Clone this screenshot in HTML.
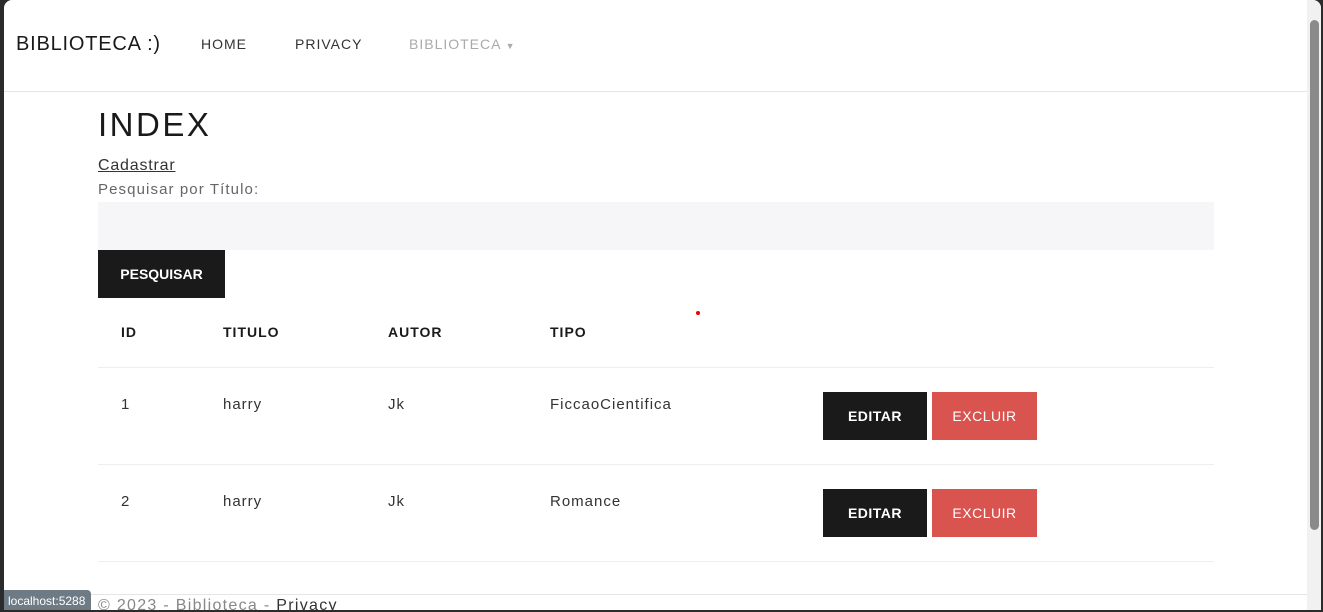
<!DOCTYPE html>
<html><head><style>
body{margin:0;width:1323px;height:612px;overflow:hidden;background:#2b2b2b;font-family:"Liberation Sans",sans-serif;position:relative}
.win{position:absolute;left:4px;top:0;width:1317px;height:610px;background:#fff;border-radius:8px 8px 0 0;overflow:hidden}
.nav{position:absolute;left:0;top:0;width:1303px;height:91px;border-bottom:1px solid #e5e5e5}
.nav span{position:absolute;top:36px;font-size:14px;letter-spacing:1px;color:#333}
.brand{left:12px!important;top:33px!important;font-size:20px!important;color:#1a1a1a!important;letter-spacing:.8px!important}
.c{position:absolute;left:94px}
.t{position:absolute;font-size:15px;color:#333;letter-spacing:1px}
.th{position:absolute;top:324px;font-size:14px;font-weight:bold;letter-spacing:1px;color:#1a1a1a}
.line{position:absolute;left:94px;width:1116px;height:1px;background:#eee}
.btn{position:absolute;width:104px;height:48px;color:#fff;font-size:14px;font-weight:bold;text-align:center;line-height:48px;letter-spacing:.5px}
.e{background:#1a1a1a}.x{background:#d9534f;font-weight:normal;width:105px}
.sb{position:absolute;left:1303px;top:0;width:14px;height:610px;background:#f1f1f1}
.thumb{position:absolute;left:3px;top:20px;width:9px;height:510px;background:#8a8a8a;border-radius:5px}
</style></head><body>
<div class="win">
<div class="nav">
<span class="brand">BIBLIOTECA :)</span>
<span style="left:197px">HOME</span>
<span style="left:291px">PRIVACY</span>
<span style="left:405px;color:#aaa">BIBLIOTECA <span style="position:static;font-size:9px;color:#aaa">▼</span></span>
</div>
<div class="c" style="top:106px;font-size:33px;letter-spacing:2.5px;color:#1a1a1a">INDEX</div>
<div class="c" style="top:157px;font-size:16px;color:#333;text-decoration:underline;letter-spacing:.8px">Cadastrar</div>
<div class="c" style="top:181px;font-size:15px;color:#666;letter-spacing:1.1px">Pesquisar por Título:</div>
<div class="c" style="top:202px;width:1116px;height:48px;background:#f6f6f8"></div>
<div class="c" style="top:250px;width:127px;height:48px;background:#1a1a1a;color:#fff;font-size:14px;font-weight:bold;line-height:48px;text-align:center">PESQUISAR</div>
<div style="position:absolute;left:692px;top:311px;width:4px;height:4px;border-radius:2px;background:#e00"></div>
<div class="th" style="left:117px">ID</div><div class="th" style="left:219px">TITULO</div><div class="th" style="left:384px">AUTOR</div><div class="th" style="left:546px">TIPO</div>
<div class="line" style="top:367px"></div>
<div class="t" style="left:117px;top:396px">1</div><div class="t" style="left:219px;top:396px">harry</div><div class="t" style="left:384px;top:396px">Jk</div><div class="t" style="left:546px;top:396px">FiccaoCientifica</div>
<div class="btn e" style="left:819px;top:392px">EDITAR</div><div class="btn x" style="left:928px;top:392px">EXCLUIR</div>
<div class="line" style="top:464px"></div>
<div class="t" style="left:117px;top:493px">2</div><div class="t" style="left:219px;top:493px">harry</div><div class="t" style="left:384px;top:493px">Jk</div><div class="t" style="left:546px;top:493px">Romance</div>
<div class="btn e" style="left:819px;top:489px">EDITAR</div><div class="btn x" style="left:928px;top:489px">EXCLUIR</div>
<div class="line" style="top:561px"></div>
<div style="position:absolute;left:0;top:594px;width:1303px;height:1px;background:#e5e5e5"></div>
<div class="t" style="left:94px;top:597px;font-size:16px;color:#888;letter-spacing:1.3px">© 2023 - Biblioteca - <span style="color:#333">Privacy</span></div>
<div style="position:absolute;left:0;top:590px;width:83px;height:22px;background:#6e7b85;border-radius:0 4px 0 0;color:#fff;font-size:12px;line-height:22px;padding-left:4px">localhost:5288</div>
<div class="sb"><div class="thumb"></div></div>
</div>
</body></html>
